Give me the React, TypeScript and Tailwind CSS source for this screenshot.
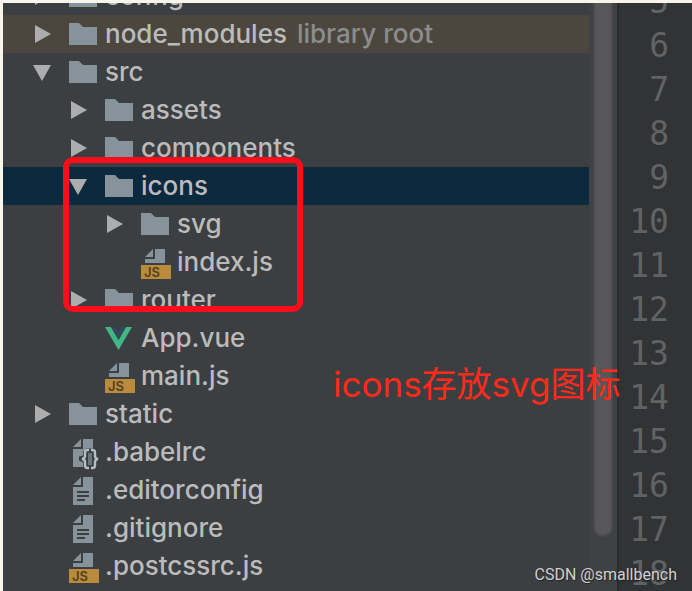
import type { ReactNode } from "react";

type Kind = "folder" | "js" | "vue" | "text" | "config";
type Item = {
  name: string;
  kind: Kind;
  level: 0 | 1 | 2;
  open?: boolean;
  note?: string;
};

const items: Item[] = [
  { name: "config", kind: "folder", level: 0 },
  { name: "node_modules", kind: "folder", level: 0, note: "library root" },
  { name: "src", kind: "folder", level: 0, open: true },
  { name: "assets", kind: "folder", level: 1 },
  { name: "components", kind: "folder", level: 1 },
  { name: "icons", kind: "folder", level: 1, open: true },
  { name: "svg", kind: "folder", level: 2 },
  { name: "index.js", kind: "js", level: 2 },
  { name: "router", kind: "folder", level: 1 },
  { name: "App.vue", kind: "vue", level: 1 },
  { name: "main.js", kind: "js", level: 1 },
  { name: "static", kind: "folder", level: 0 },
  { name: ".babelrc", kind: "config", level: 0 },
  { name: ".editorconfig", kind: "text", level: 0 },
  { name: ".gitignore", kind: "text", level: 0 },
  { name: ".postcssrc.js", kind: "js", level: 0 },
];

const lines = [5, 6, 7, 8, 9, 10, 11, 12, 13, 14, 15, 16, 17, 18];

const indent = ["pl-[30px]", "pl-[66px]", "pl-[102px]"];

function Arrow({ open }: { open?: boolean }) {
  return (
    <svg viewBox="0 0 18 18" className="size-[18px]" fill="#adadad" aria-hidden="true">
      {open ? <path d="M0 2h18L9 18z" /> : <path d="M2 0v18l16-9z" />}
    </svg>
  );
}

const drawings: Record<Kind, ReactNode> = {
  folder: <path d="M0 5h10l4 4h14v18H0z" fill="#87939a" />,
  js: (
    <>
      <path d="M4 11 12 3v8zM14 3h10v14H4v-4h10z" fill="#87939a" />
      <path d="M0 19h30v14H0z" fill="#ba8b3c" />
      <text x="3" y="31" className="font-['Inter',sans-serif] text-[13px] font-semibold" fill="#50401f">
        JS
      </text>
    </>
  ),
  vue: (
    <>
      <path d="M0 5h6l7.500 13L21 5h6L13.500 28z" fill="#41b883" />
      <path d="M6 5h4.500l3 5 3-5H21l-7.500 13z" fill="#35495e" />
    </>
  ),
  text: (
    <>
      <path d="M4 11 12 3v8zM14 3h10v28H4V13h10z" fill="#87939a" />
      <path d="M8 17h12v2H8zM8 21h12v2H8zM8 25h8v2H8z" fill="#3c3f41" />
    </>
  ),
  config: (
    <>
      <path d="M4 11 12 3v8zM14 3h10v28H4V13h10z" fill="#87939a" />
      <path
        d="M17 12.500h8l4 3v4l3 3-3 3v4l-3 3h-9l-3-2v-4l-4-2v-4l4-1v-4z"
        fill="#3c3f41"
      />
      <path d="M19 17h4v12h-4z" fill="#6e7679" />
      <path
        d="M20 14h-1.500q-2.500 0-2.500 2.500v3.500q0 2.500-3 3 3 .5 3 3v3.500q0 2.500 2.500 2.500H20M22 14h1.500q2.500 0 2.500 2.500v3.500q0 2.500 3 3-3 .5-3 3v3.500q0 2.500-2.500 2.500H22"
        fill="none"
        stroke="#b2c0c6"
        strokeWidth="2.400"
      />
    </>
  ),
};

function FileIcon({ kind }: { kind: Kind }) {
  return (
    <svg viewBox="0 0 30 32" className="h-8 w-[30px] overflow-visible" aria-hidden="true">
      {drawings[kind]}
    </svg>
  );
}

function Row({ item }: { item: Item }) {
  const background =
    item.name === "icons" ? "bg-[#0d293e]" : item.name === "node_modules" ? "bg-[#4b473f]" : "";

  return (
    <li>
      <button
        type="button"
        className={`flex h-[38px] w-full items-center whitespace-nowrap text-left ${indent[item.level]} ${background}`}
      >
        <span className="mr-[18px] w-[18px] shrink-0">
          {item.kind === "folder" && <Arrow open={item.open} />}
        </span>
        <span className="mr-1.5 shrink-0">
          <FileIcon kind={item.kind} />
        </span>
        <span>{item.name}</span>
        {item.note && <span className="ml-2.5 text-[#8c8c8c]">{item.note}</span>}
      </button>
    </li>
  );
}

export default function App() {
  return (
    <div className="h-screen overflow-hidden bg-[#f8f6ec] pt-[3px] pl-[3px]">
      <div className="relative flex h-full bg-[#3c3f41]">
        <nav
          aria-label="Project"
          className="min-w-0 flex-1 overflow-hidden font-['Inter','Liberation_Sans',sans-serif] text-[26px] leading-[36px] font-medium text-[#bbbbbb]"
        >
          <ul className="-mt-[26px]">
            {items.map((item) => (
              <Row key={item.name} item={item} />
            ))}
          </ul>
        </nav>

        <div className="w-7 shrink-0 bg-[#3f4244] px-1">
          <div className="h-[534px] w-5 rounded-b-full border-x-2 border-b-2 border-[#4b4b4c] bg-[#575759]" />
        </div>

        <div className="w-[75px] shrink-0 overflow-hidden border-l-2 border-[#2b2b2b] bg-[#313335]">
          <ol className="-mt-[23px] pr-[23px] text-right font-['DejaVu_Sans_Mono',monospace] text-[33px] leading-[44px] text-[#606366]">
            {lines.map((line) => (
              <li key={line}>{line}</li>
            ))}
          </ol>
        </div>

        {/* annotations over the editor */}
        <div className="absolute top-[154px] left-[60px] h-[155px] w-[240px] rounded-[10px] border-6 border-[#fc0d1b]" />
        <p className="absolute top-[357px] left-[330px] whitespace-nowrap font-['Inter','Noto_Sans_CJK_SC',sans-serif] text-[35px] leading-[48px] text-[#ff2a1a]">
          icons存放svg图标
        </p>
        <p className="absolute right-[15px] bottom-[4px] font-['Roboto','Liberation_Sans',sans-serif] text-[16px] leading-6 text-[#d0d0d0] [text-shadow:1px_1px_1px_#222]">
          CSDN @smallbench
        </p>
      </div>
    </div>
  );
}
